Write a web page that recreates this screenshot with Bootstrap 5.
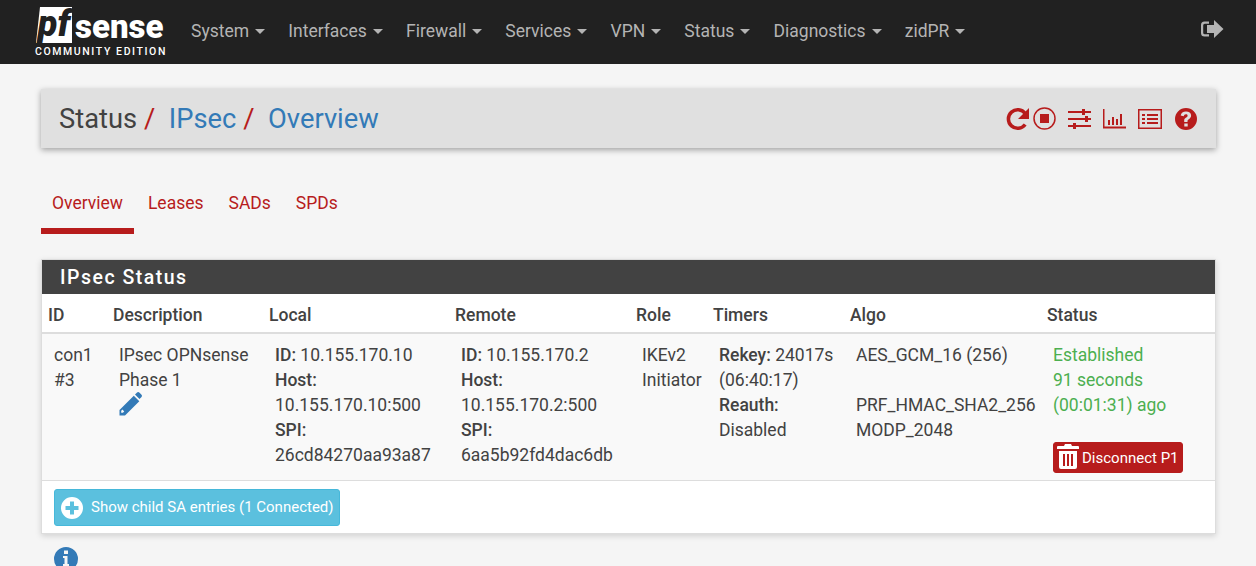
<!DOCTYPE html>
<html lang="en">
<head>
<meta charset="utf-8">
<title>Status / IPsec / Overview</title>
<link href="https://cdn.jsdelivr.net/npm/bootstrap@5.3.0/dist/css/bootstrap.min.css" rel="stylesheet">
<style>
html,body{height:566px;overflow:hidden}
body{background:#f5f5f5;font-family:Roboto,sans-serif;font-size:17.5px;line-height:25px;color:#424242}
.top-bar{height:64px;background:#212121;padding:0;flex-wrap:nowrap}
.logo-wrap{width:191px;height:64px;position:relative;flex:none}
.logo-pf{position:absolute;left:36px;top:7px;width:36px;height:36px;background:#fff;color:#212121;font:italic 900 36px/34px Roboto,sans-serif;text-align:center;clip-path:polygon(4px 0,100% 0,100% 100%,0 100%)}
.logo-sense{position:absolute;left:75px;top:9px;color:#fff;font:900 33px/36px Roboto,sans-serif}
.logo-ce{position:absolute;left:35px;top:46px;color:#fff;font:500 10.500px/12px Roboto,sans-serif;letter-spacing:1.600px;white-space:nowrap}
.top-menu .top-link{color:#b4b4b4;font-size:17.500px;line-height:24px;padding:0;margin:0 23.200px 2px 0;text-decoration:none;white-space:nowrap;display:flex;align-items:center}
.caret-mark{display:inline-block;width:0;height:0;margin-left:6px;border-top:5px solid #b4b4b4;border-left:5px solid transparent;border-right:5px solid transparent}
.exit-icon{margin:0 32px 7px auto;width:24px;height:20px;fill:#b4b4b4;flex:none}
.page-wrap{padding:0 40px 0 41px}
.title-bar{margin-top:25px;height:59px;background:#e0e0e0;box-shadow:0 2px 6px rgba(0,0,0,.35);padding:0 18px 0 18px}
.crumb-line{font-size:27.300px;line-height:40px;margin:0;font-weight:400;color:#424242}
.crumb-line a{color:#337ab7;text-decoration:none}
.crumb-sep{color:#b71c1c;margin:0 13.500px 0 7px}
.tool-set{gap:12px}
.tool-set svg{display:block;flex:none}
.tab-row{margin-top:34px;height:52px}
.tab-row .tab-link{display:block;color:#b71c1c;font-size:17.500px;line-height:25px;padding:9px 11px 0;height:52px;text-decoration:none;margin-right:3px}
.tab-row .tab-on{border-bottom:6px solid #b71c1c}
.stat-panel{margin-top:25px;background:#fff;border:1px solid #ddd;box-shadow:0 2px 6px rgba(0,0,0,.15);width:1175px}
.stat-head{height:34px;background:#424242;color:#fff;font-size:19.500px;font-weight:500;letter-spacing:1.500px;line-height:36px;padding-left:18px}
.stat-table{table-layout:fixed;width:1173px;margin:0;border-collapse:collapse;--bs-table-bg:transparent}
.stat-table th{font-weight:500;padding:9px 6px 4px;height:39px;line-height:25px;color:#424242;border-bottom:2px solid #ddd;box-sizing:border-box;font-size:17.500px}
.stat-table td{background:#f9f9f9;padding:9px 6px 7px 12px;vertical-align:top;color:#424242;border-bottom:1px solid #ddd}
.stat-table td b{font-weight:500}
.w-a{width:65px}.w-b{width:156px}.w-c{width:186px}.w-d{width:181px}.w-e{width:77px}.w-f{width:137px}.w-g{width:197px}.w-h{width:174px}
.ok-text{color:#4caf50}
.wide-gap{height:25px}
.short-gap{height:24px}
.edit-pen{display:block;margin:-1px 0 0 -1px}
.disc-btn{display:flex;width:fit-content;align-items:center;height:31px;background:#b71c1c;color:#fff;border:1px solid #b71c1c;border-radius:3px;font-size:15px;line-height:20px;padding:0 3px 0 3px;white-space:nowrap}
.disc-btn svg{fill:#fff;margin:-3px 3px 0 0}
.foot-row{padding:8px 12px 7px;height:52px}
.child-btn{display:inline-flex;align-items:center;height:37px;background:#5bc0de;color:#fff;border:1px solid #46b8da;border-radius:3px;font-size:15px;padding:0 5px 0 5px;white-space:nowrap}
.child-btn svg{fill:#fff;margin-right:7px}
.info-icon{display:block;fill:#337ab7;margin:13px 0 0 13px}
</style>
</head>
<body>
<nav class="navbar top-bar d-flex align-items-center">
  <div class="logo-wrap">
    <span class="logo-pf">pf</span>
    <span class="logo-sense">sense</span>
    <span class="logo-ce">COMMUNITY EDITION</span>
  </div>
  <div class="top-menu d-flex">
    <a class="top-link" href="#">System<span class="caret-mark"></span></a>
    <a class="top-link" href="#">Interfaces<span class="caret-mark"></span></a>
    <a class="top-link" href="#">Firewall<span class="caret-mark"></span></a>
    <a class="top-link" href="#">Services<span class="caret-mark"></span></a>
    <a class="top-link" href="#">VPN<span class="caret-mark"></span></a>
    <a class="top-link" href="#">Status<span class="caret-mark"></span></a>
    <a class="top-link" href="#">Diagnostics<span class="caret-mark"></span></a>
    <a class="top-link" href="#">zidPR<span class="caret-mark"></span></a>
  </div>
  <svg class="exit-icon" viewBox="0 0 24 20"><path d="M9 2.500H4.500A3.500 3.500 0 0 0 1 6v8a3.500 3.500 0 0 0 3.500 3.500H9v-2.200H4.800A1.600 1.600 0 0 1 3.200 13.700V6.300A1.600 1.600 0 0 1 4.800 4.700H9z"/><path d="M14 1l9.500 9-9.500 9v-5H7V6h7z"/></svg>
</nav>
<main class="page-wrap">
  <header class="title-bar d-flex align-items-center justify-content-between">
    <h1 class="crumb-line">Status<span class="crumb-sep">/</span><a href="#">IPsec</a><span class="crumb-sep">/</span><a href="#">Overview</a></h1>
    <div class="tool-set d-flex align-items-center">
      <div class="d-flex align-items-center gap-1">
      <svg width="23" height="24" viewBox="0 0 23 24"><path d="M19.200 6.500A9.300 9.300 0 1 0 19.200 17.500" fill="none" stroke="#b71c1c" stroke-width="3.500"/><path d="M23 1v11H12z" fill="#b71c1c"/></svg>
      <svg width="23" height="23" viewBox="0 0 23 23"><circle cx="11.500" cy="11.500" r="10.500" fill="none" stroke="#b71c1c" stroke-width="1.500"/><rect x="7" y="7" width="9" height="9" fill="#b71c1c"/></svg>
      </div>
      <svg width="23" height="22" viewBox="0 0 23 22" fill="#b71c1c"><path d="M0 3h23v2H0zM0 10h23v2H0zM0 17h23v2H0z"/><path d="M14 1h3v6h-3zM17 8h3v6h-3zM5 15h3v6H5z"/></svg>
      <svg width="23" height="22" viewBox="0 0 23 22" fill="#b71c1c"><path d="M0 1h1.500v17.500H23v2H0zM5 12h2v5H5zM9 9h2v8H9zM13 11h2v6h-2zM17 6h2v11h-2z"/></svg>
      <svg width="24" height="22" viewBox="0 0 24 22" fill="#b71c1c"><path fill-rule="evenodd" d="M0 1h24v20H0zM1.500 2.500v17h21v-17zM4 6h3v2H4zM9 6h11v2H9zM4 10h3v2H4zM9 10h11v2H9zM4 14h3v2H4zM9 14h11v2H9z"/></svg>
      <svg width="24" height="24" viewBox="0 0 24 24" fill="#b71c1c"><path fill-rule="evenodd" d="M12 1a11 11 0 1 1 0 22a11 11 0 0 1 0-22zM10.300 16.500v3h3.400v-3zM12 4.500c-3 0-4.800 1.500-5.300 4l3 .8c.3-1.300 1-2 2.200-2 1 0 1.700.5 1.700 1.400 0 .8-.5 1.200-1.500 1.900-1.300.9-1.900 1.700-1.900 3v1.300h3.300v-.9c0-.7.300-1.100 1.300-1.800 1.400-1 2.300-2 2.300-3.700C17.100 6 15 4.500 12 4.500z"/></svg>
    </div>
  </header>
  <div class="tab-row d-flex">
    <a class="tab-link tab-on" href="#">Overview</a>
    <a class="tab-link" href="#">Leases</a>
    <a class="tab-link" href="#">SADs</a>
    <a class="tab-link" href="#">SPDs</a>
  </div>
  <section class="stat-panel">
    <div class="stat-head">IPsec Status</div>
    <table class="table stat-table">
      <thead><tr>
        <th class="w-a">ID</th><th class="w-b">Description</th><th class="w-c">Local</th><th class="w-d">Remote</th><th class="w-e">Role</th><th class="w-f">Timers</th><th class="w-g">Algo</th><th class="w-h">Status</th>
      </tr></thead>
      <tbody><tr>
        <td>con1 #3</td>
        <td>IPsec OPNsense Phase 1<svg class="edit-pen" width="24" height="24" viewBox="0 0 24 24" fill="#337ab7"><path d="M17 2.500l1.800-1.800a2 2 0 0 1 2.800 0l1.700 1.700a2 2 0 0 1 0 2.800L21.500 7zM15.800 3.700l5.500 5.500L7 23.500H1.500V18zM4.500 17.500l-1.300 1.300v2h1.700l1.300-1.300z"/></svg></td>
        <td><b>ID:</b> 10.155.170.10<br><b>Host:</b><br>10.155.170.10:500<br><b>SPI:</b><br>26cd84270aa93a87</td>
        <td><b>ID:</b> 10.155.170.2<br><b>Host:</b><br>10.155.170.2:500<br><b>SPI:</b><br>6aa5b92fd4dac6db</td>
        <td>IKEv2<br>Initiator</td>
        <td><b>Rekey:</b> 24017s (06:40:17)<br><b>Reauth:</b><br>Disabled</td>
        <td>AES_GCM_16 (256)<br><div class="wide-gap"></div>PRF_HMAC_SHA2_256<br>MODP_2048</td>
        <td><span class="ok-text">Established<br>91 seconds<br>(00:01:31) ago</span><div class="short-gap"></div>
          <span class="disc-btn"><svg width="22" height="25" viewBox="0 0 22 25"><path fill-rule="evenodd" d="M8 0h6l1 2h6a1 1 0 0 1 1 1v2H0V3a1 1 0 0 1 1-1h6zM2 7h18v16a2 2 0 0 1-2 2H4a2 2 0 0 1-2-2zM6 10v12h2V10zM10 10v12h2V10zM14 10v12h2V10z"/></svg>Disconnect P1</span></td>
      </tr></tbody>
    </table>
    <div class="foot-row"><span class="child-btn"><svg width="24" height="24" viewBox="0 0 24 24"><path fill-rule="evenodd" d="M12 1a11 11 0 1 1 0 22a11 11 0 0 1 0-22zM10 5.500v4.500H5.500v4H10v4.500h4V14h4.500v-4H14V5.500z"/></svg>Show child SA entries (1 Connected)</span></div>
  </section>
  <svg class="info-icon" width="24" height="24" viewBox="0 0 24 24"><path fill-rule="evenodd" d="M12 0a12 12 0 1 1 0 24a12 12 0 0 1 0-24zM10 3.500v3.500h4V3.500zM9 9v2h1.500v6H9v2h6v-2h-1.500V9z"/></svg>
</main>
<script src="https://cdn.jsdelivr.net/npm/bootstrap@5.3.0/dist/js/bootstrap.bundle.min.js"></script>
</body>
</html>
